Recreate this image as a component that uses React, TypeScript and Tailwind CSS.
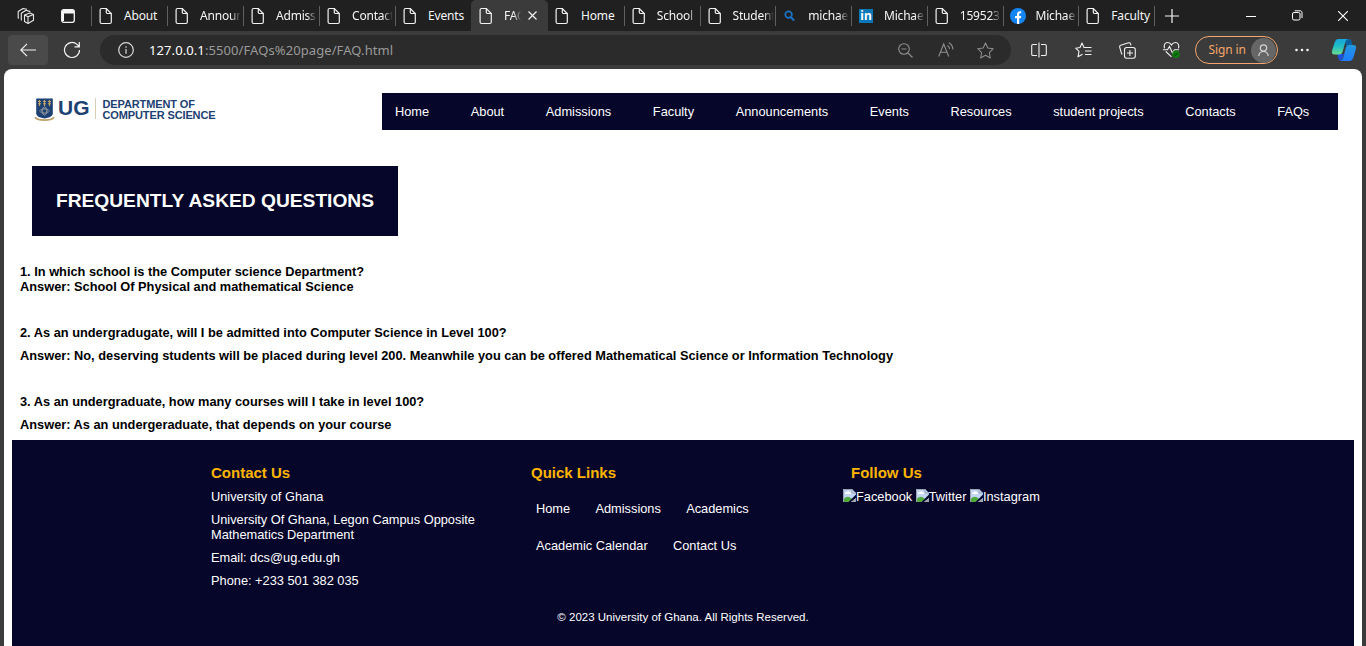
import React from "react";

type TabKind = "page" | "search" | "linkedin" | "facebook";

const tabs: { title: string; kind: TabKind; active?: boolean; fade?: boolean }[] = [
  { title: "About", kind: "page" },
  { title: "Announ", kind: "page", fade: true },
  { title: "Admiss", kind: "page", fade: true },
  { title: "Contact", kind: "page", fade: true },
  { title: "Events", kind: "page" },
  { title: "FAQ", kind: "page", active: true, fade: true },
  { title: "Home", kind: "page" },
  { title: "School", kind: "page", fade: true },
  { title: "Student", kind: "page", fade: true },
  { title: "michae", kind: "search", fade: true },
  { title: "Michae", kind: "linkedin", fade: true },
  { title: "159523", kind: "page", fade: true },
  { title: "Michae", kind: "facebook", fade: true },
  { title: "Faculty", kind: "page" },
];

function TabIcon({ kind }: { kind: TabKind }) {
  if (kind === "search")
    return (
      <svg width="14" height="16" viewBox="0 0 14 16" fill="none" stroke="#1a73c9" className="shrink-0">
        <circle cx="5.6" cy="6.6" r="3.3" strokeWidth="1.7" />
        <path d="M8 9.2 11.2 12.6" strokeWidth="2" />
      </svg>
    );
  if (kind === "linkedin")
    return (
      <span className="flex size-[14px] shrink-0 items-center justify-center bg-[#0a77b7] text-[12px] leading-[14px] font-bold text-white">
        in
      </span>
    );
  if (kind === "facebook")
    return (
      <svg width="16" height="16" viewBox="0 0 16 16" className="-ml-px shrink-0">
        <circle cx="8" cy="8" r="8" fill="#1385f5" />
        <path d="M7 16V10.3H5V8H7V6.4C7 4.2 8.3 3.2 10 3.2c.7 0 1.2.1 1.2.1v2h-.9c-.9 0-1.1.5-1.1 1.1V8h2l-.4 2.3H9.2V16z" fill="#fff" />
      </svg>
    );
  return (
    <svg width="14" height="18" viewBox="0 0 14 18" fill="none" stroke="#f2f2f2" strokeWidth="1.2" className="shrink-0">
      <path d="M1.1 3c0-.9.6-1.5 1.5-1.5h4.7l5 5V15c0 .9-.6 1.500-1.500 1.500H2.600C1.700 16.500 1.100 15.900 1.100 15z" />
      <path d="M7.300 1.500V5.300c0 .8.4 1.200 1.200 1.200h3.800" />
    </svg>
  );
}

function TabStrip() {
  return (
    <div className="flex h-[31px] shrink-0 items-center bg-[#202020] text-[#f5f5f5]">
      <div className="flex w-[91px] shrink-0 items-center pl-[17px]">
        <svg width="18" height="18" viewBox="0 0 18 18" fill="none" stroke="#e8e8e8" strokeWidth="1.1" strokeLinejoin="round">
          <path d="M7.500 8 13 6l3.500 1.600v5.600L11 16.500l-3.500-2z" />
          <path d="M7.500 8 11 9.800l5.500-2.200M11 9.800v6.500" />
          <path d="M4.800 13.300l-.5-.3V6.300L9 3.300l4.300 1.300" />
          <path d="M2 11.300 1.200 11V4.500L6 1.500l4 .8" />
        </svg>
        <svg width="14" height="14" viewBox="0 0 14 14" fill="none" className="ml-[26px]">
          <rect x=".7" y=".7" width="12.600" height="12.600" rx="2" stroke="#f5f5f5" strokeWidth="1.300" />
          <path d="M1 2.500Q1 1 2.500 1h9Q13 1 13 2.500V4.500H1zM1 4h2v8H1z" fill="#f5f5f5" />
        </svg>
      </div>
      {tabs.map((t, i) => (
        <div
          key={i}
          className={
            t.active
              ? "flex h-full w-[77px] shrink-0 items-center rounded-t-[5px] bg-[#3b3b3b] pl-[8px]"
              : i < 5
                ? "flex h-full w-[76px] shrink-0 items-center"
                : "flex h-full w-[75.750px] shrink-0 items-center"
          }
        >
          {!t.active && (
            <span className={i === 6 ? "h-5 w-px" : "h-5 w-px bg-[#606060]"} />
          )}
          <span className={t.active ? "flex w-[25px]" : i === 6 ? "flex w-[32px] pl-[6px]" : "flex w-[32px] pl-[7px]"}>
            <TabIcon kind={t.kind} />
          </span>
          <span
            className={
              t.active
                ? "w-[18px] overflow-hidden text-[12px] tracking-[-0.200px] whitespace-nowrap [mask-image:linear-gradient(to_right,black_55%,transparent_95%)]"
                : t.fade
                  ? "w-[41px] overflow-hidden text-[12px] tracking-[-0.200px] whitespace-nowrap [mask-image:linear-gradient(to_right,black_75%,transparent)]"
                  : "text-[12px] tracking-[-0.150px] whitespace-nowrap"
            }
          >
            {t.title}
          </span>
          {t.active && (
            <svg width="9" height="9" viewBox="0 0 9 9" stroke="#f0f0f0" strokeWidth="1.200" className="ml-[6px]">
              <path d="M.5.5l8 8M8.500.5l-8 8" />
            </svg>
          )}
        </div>
      ))}
      <span className="h-5 w-px shrink-0 bg-[#606060]" />
      <svg width="14" height="14" viewBox="0 0 14 14" stroke="#f5f5f5" strokeWidth="1.200" className="ml-[10px] shrink-0">
        <path d="M7 0v14M0 7h14" />
      </svg>
      <div className="ml-auto flex items-center pr-[18px]">
        <svg width="10" height="10" viewBox="0 0 10 10" stroke="#fff">
          <path d="M0 5.500h10" />
        </svg>
        <svg width="11" height="11" viewBox="0 0 11 11" fill="none" stroke="#fff" className="ml-[36px]">
          <rect x=".5" y="2.500" width="7.500" height="7.500" rx="1.500" />
          <path d="M2.700.8H8c1.300 0 2 .7 2 2V8" />
        </svg>
        <svg width="10" height="10" viewBox="0 0 10 10" stroke="#fff" strokeWidth="1.100" className="ml-[35px]">
          <path d="M0 0l10 10M10 0 0 10" />
        </svg>
      </div>
    </div>
  );
}

const star = "M8 .9l2.200 4.700 5.100.7-3.700 3.600.9 5.100L8 12.500 3.500 15l.9-5.100L.7 6.300l5.100-.7z";

function Toolbar() {
  return (
    <div className="flex h-[38px] shrink-0 items-center bg-[#3b3b3b]">
      <div className="ml-2 flex h-[30px] w-10 shrink-0 items-center justify-center rounded bg-[#4a4a4a]">
        <svg width="16" height="14" viewBox="0 0 16 14" fill="none" stroke="#f2f2f2" strokeWidth="1.200">
          <path d="M16 7H.8M7 .8.8 7 7 13.200" />
        </svg>
      </div>
      <svg width="18" height="18" viewBox="0 0 18 18" fill="none" stroke="#f2f2f2" strokeWidth="1.200" className="ml-[15px] shrink-0">
        <path d="M16.500 9A7.500 7.500 0 1 1 14 3.400L16 5.500M16.300 1v4.800h-4.800" />
      </svg>
      <div className="ml-[19px] flex h-[30px] w-[911px] shrink-0 items-center rounded-full bg-[#2b2b2b]">
        <svg width="16" height="16" viewBox="0 0 16 16" fill="none" stroke="#d8d8d8" strokeWidth="1.200" className="ml-[18px] shrink-0">
          <circle cx="8" cy="8" r="7.300" />
          <path d="M8 7v4.800M8 4.300v1.400" />
        </svg>
        <span className="mt-px ml-[15px] text-[13px] tracking-[0.090px] whitespace-nowrap text-[#9a9a9a]">
          <span className="text-white">127.0.0.1</span>:5500/FAQs%20page/FAQ.html
        </span>
        <div className="ml-auto flex items-center pr-[17px]">
          <svg width="15" height="15" viewBox="0 0 15 15" fill="none" stroke="#8f8f8f" strokeWidth="1.100">
            <circle cx="6" cy="6" r="5.300" />
            <path d="M10 10l4.500 4.500M3.500 6h5" />
          </svg>
          <svg width="16" height="16" viewBox="0 0 16 16" fill="none" stroke="#8f8f8f" strokeWidth="1.100" className="ml-[25px]">
            <path d="M.7 14.500 5.700 2l5 12.500M2.500 10.300h6.400M9.500 3.500c1.300.8 2 2 2.100 3.500M10.800.8c2.400 1.300 3.900 3.600 4.200 6.700" />
          </svg>
          <svg width="17" height="17" viewBox="0 0 16 16" fill="none" stroke="#8f8f8f" strokeLinejoin="round" className="ml-[23px]">
            <path d={star} />
          </svg>
        </div>
      </div>
      <div className="ml-[19.500px] flex flex-1 items-center">
        <svg width="16" height="16" viewBox="0 0 16 16" fill="none" stroke="#f0f0f0" strokeWidth="1.100" className="shrink-0">
          <path d="M6 2.500H2Q.7 2.500.7 3.800v8.400q0 1.300 1.300 1.300h4M10 2.500h4q1.300 0 1.300 1.300v8.400q0 1.300-1.300 1.300h-4M8 .5v15" />
        </svg>
        <svg width="17" height="16" viewBox="0 0 17 16" fill="none" stroke="#f0f0f0" strokeWidth="1.100" strokeLinejoin="round" className="ml-[28px] shrink-0">
          <path d="M10 5.500H9L7 1 5 5.500.7 6.200 4 9.400 3 14.800l4.500-2.600M10 5.500h6.500M10 9h6.500M10 12.500h6.500" />
        </svg>
        <svg width="17" height="17" viewBox="0 0 17 17" fill="none" stroke="#f0f0f0" strokeWidth="1.100" className="ml-[27px] shrink-0">
          <rect x="5.500" y="5.500" width="10.800" height="10.800" rx="2.200" />
          <path d="M10.900 8v6M8 11h6M3.300 12.300 2.500 11.500.7 5.200Q.4 3.800 1.700 3.300L9.600.8q1.400-.3 1.900 1l.5 1.500" />
        </svg>
        <svg width="18" height="18" viewBox="0 0 18 18" fill="none" stroke="#f0f0f0" strokeWidth="1.100" className="ml-[27px] shrink-0">
          <path d="M1.500 7.300C.4 3.500 2.300 1.500 4.500 1.500S7.800 2.700 8.500 3.900C9.200 2.700 10.500 1.500 12.500 1.500s4.100 2 3 5.800M2.800 10.500l5.700 5.300M0 8.800h4.500l2-3.300 3 6.500 2-3.200h4.500" />
          <circle cx="13" cy="13.200" r="3.800" fill="#107c10" stroke="none" />
          <path d="M11.300 13.300l1.300 1.200 2.200-2.400" stroke="#0a4f0a" />
        </svg>
        <div className="ml-[14px] flex h-[28px] w-[83px] shrink-0 items-center justify-between rounded-full border border-[#f5a66c] pr-px pl-[13px] text-[12px] tracking-[-0.100px] whitespace-nowrap text-[#f5a66c]">
          Sign in
          <span className="flex size-[25px] items-center justify-center rounded-full bg-[#666]">
            <svg width="11" height="13" viewBox="0 0 11 13" fill="none" stroke="#d6d6d6" strokeWidth="1.200">
              <circle cx="5.500" cy="4" r="3.200" />
              <path d="M.8 12c0-6 9.400-6 9.400 0" />
            </svg>
          </span>
        </div>
        <svg width="14" height="4" viewBox="0 0 14 4" fill="#f2f2f2" className="ml-[17px] shrink-0">
          <circle cx="1.500" cy="2" r="1.300" />
          <circle cx="7" cy="2" r="1.300" />
          <circle cx="12.500" cy="2" r="1.300" />
        </svg>
        <svg width="26" height="24" viewBox="0 0 26 24" className="ml-[22px] shrink-0">
          <defs>
            <linearGradient id="ca" x1="0" y1="0" x2="0" y2="1">
              <stop offset="0" stopColor="#16a5dc" />
              <stop offset=".5" stopColor="#23bfc4" />
              <stop offset="1" stopColor="#6fdc8c" />
            </linearGradient>
            <linearGradient id="cb" x1="0" y1="0" x2="0" y2="1">
              <stop offset="0" stopColor="#2497dc" />
              <stop offset="1" stopColor="#1f7cff" />
            </linearGradient>
          </defs>
          <path d="M13 1h5q2 0 2.600 2L21.500 8h-6z" fill="#0a5f9e" />
          <path d="M6 16h7l-2.500 7q-2.200 0-2.800-2z" fill="#1e50d8" />
          <path d="M7 1h10q-2 .6-2.700 3L11.500 14q-.8 2.500-3.300 2.500H3.500Q.1 16.500 1.100 12.500L3.800 4Q4.800 1 7 1z" fill="url(#ca)" />
          <path d="M17.800 7H22.500q3.400 0 2.400 4l-2.700 9q-1 3-3.200 3H9.500q2-.8 2.600-3l2.800-10.500Q15.600 7 17.800 7z" fill="url(#cb)" />
        </svg>
      </div>
    </div>
  );
}

function Crest() {
  return (
    <svg width="22" height="25" viewBox="0 0 22 25" className="shrink-0">
      <path d="M2.200 1.500h16.600V17q-1 3.500-8.300 4.500Q3.200 20.500 2.200 17z" fill="#1d4173" />
      <path d="M5.500 3v6M10.500 3v6M15.500 3v6M4 4.500h3M9 4.500h3M14 4.500h3M4 6.800h3M9 6.800h3M14 6.800h3" stroke="#c5a567" strokeWidth="1.100" />
      <g fill="none" stroke="#8e9499" strokeWidth=".8">
        <ellipse cx="10.500" cy="14" rx="4.800" ry="2" />
        <ellipse cx="10.500" cy="14" rx="2" ry="4.300" />
        <circle cx="10.500" cy="14" r="2.900" />
      </g>
      <path d="M1 20.200c3 3.800 16 3.800 19 0" fill="none" stroke="#bda06a" strokeWidth="1.800" />
    </svg>
  );
}

const nav = ["Home", "About", "Admissions", "Faculty", "Announcements", "Events", "Resources", "student projects", "Contacts", "FAQs"];

function BrokenImage({ alt }: { alt: string }) {
  return (
    <span className="flex items-start">
      <svg width="13" height="13" viewBox="0 0 13 13" className="shrink-0">
        <path d="M0 0h9l4 4v9H0z" fill="#c3d5f7" />
        <path d="M2 5q0-2 2-2 1-1.500 2.500 0Q8 3 8 5z" fill="#fff" />
        <path d="M0 13V11q4-6 9-1l-3 3z" fill="#4faa3c" />
        <path d="M13 5.500 5.500 13H8l5-4z" fill="#06062b" />
        <path d="M8 13l5-4v4z" fill="#9fa7ae" />
        <path d="M.5 13V.5H9M9 0v4h4" fill="none" stroke="#9aa3ad" />
      </svg>
      {alt}
    </span>
  );
}

export default function App() {
  return (
    <div className="flex h-[646px] w-[1366px] flex-col overflow-hidden bg-[#3b3b3b] font-['Noto_Sans',sans-serif]">
      <TabStrip />
      <Toolbar />
      <div className="mx-1 flex flex-1 flex-col rounded-t-[8px] bg-white px-2 font-['Liberation_Sans',sans-serif] text-[12.800px] leading-[15px] text-black">
        <header className="flex pt-6 pr-4 pl-[22px]">
          <div className="flex h-[37px] w-[348px] items-start pt-[4px] text-[#1d4173]">
            <Crest />
            <span className="ml-[2px] text-[21px] leading-[21px] font-bold">UG</span>
            <span className="mt-px ml-[5px] h-[21px] w-px bg-[#d8cdb4]" />
            <span className="mt-[2px] ml-[7px] text-[11px] leading-[11px] font-bold tracking-[-0.120px] whitespace-nowrap">
              DEPARTMENT OF
              <br />
              COMPUTER SCIENCE
            </span>
          </div>
          <nav className="flex h-[37px] flex-1 items-center gap-[41.600px] bg-[#06062b] pl-[13px] whitespace-nowrap text-white">
            {nav.map((n) => (
              <a key={n}>{n}</a>
            ))}
          </nav>
        </header>
        <h1 className="mt-9 ml-5 flex h-[70px] w-[366px] items-center justify-center bg-[#06062b] pb-[2px] text-[19.200px] font-bold whitespace-nowrap text-white">
          FREQUENTLY ASKED QUESTIONS
        </h1>
        <main className="px-2 pt-[28px] font-bold">
          <p>1. In which school is the Computer science Department?</p>
          <p>Answer: School Of Physical and mathematical Science</p>
          <p className="mt-[31px]">2. As an undergradugate, will I be admitted into Computer Science in Level 100?</p>
          <p className="mt-2">
            Answer: No, deserving students will be placed during level 200. Meanwhile you can be offered Mathematical Science or Information Technology
          </p>
          <p className="mt-[31px]">3. As an undergraduate, how many courses will I take in level 100?</p>
          <p className="mt-2">Answer: As an undergeraduate, that depends on your course</p>
        </main>
        <footer className="mt-2 flex flex-1 flex-col bg-[#06062b] pt-6 text-white">
          <div className="flex pl-[199px]">
            <section className="flex w-80 flex-col gap-2">
              <h3 className="text-[15px] leading-[17px] font-bold text-[#ffb400]">Contact Us</h3>
              <p>University of Ghana</p>
              <p>
                University Of Ghana, Legon Campus Opposite
                <br />
                Mathematics Department
              </p>
              <p>Email: dcs@ug.edu.gh</p>
              <p>Phone: +233 501 382 035</p>
            </section>
            <section className="w-[312px]">
              <h3 className="text-[15px] leading-[17px] font-bold text-[#ffb400]">Quick Links</h3>
              <div className="mt-5 ml-[5px] flex gap-[25.300px]">
                <a>Home</a>
                <a>Admissions</a>
                <a>Academics</a>
              </div>
              <div className="mt-[22px] ml-[5px] flex gap-[25.300px]">
                <a>Academic Calendar</a>
                <a>Contact Us</a>
              </div>
            </section>
            <section>
              <h3 className="ml-2 text-[15px] leading-[17px] font-bold text-[#ffb400]">Follow Us</h3>
              <div className="mt-2 flex gap-[3.500px]">
                <BrokenImage alt="Facebook" />
                <BrokenImage alt="Twitter" />
                <BrokenImage alt="Instagram" />
              </div>
            </section>
          </div>
          <p className="mt-[22px] text-center text-[11.500px]">© 2023 University of Ghana. All Rights Reserved.</p>
        </footer>
      </div>
    </div>
  );
}
